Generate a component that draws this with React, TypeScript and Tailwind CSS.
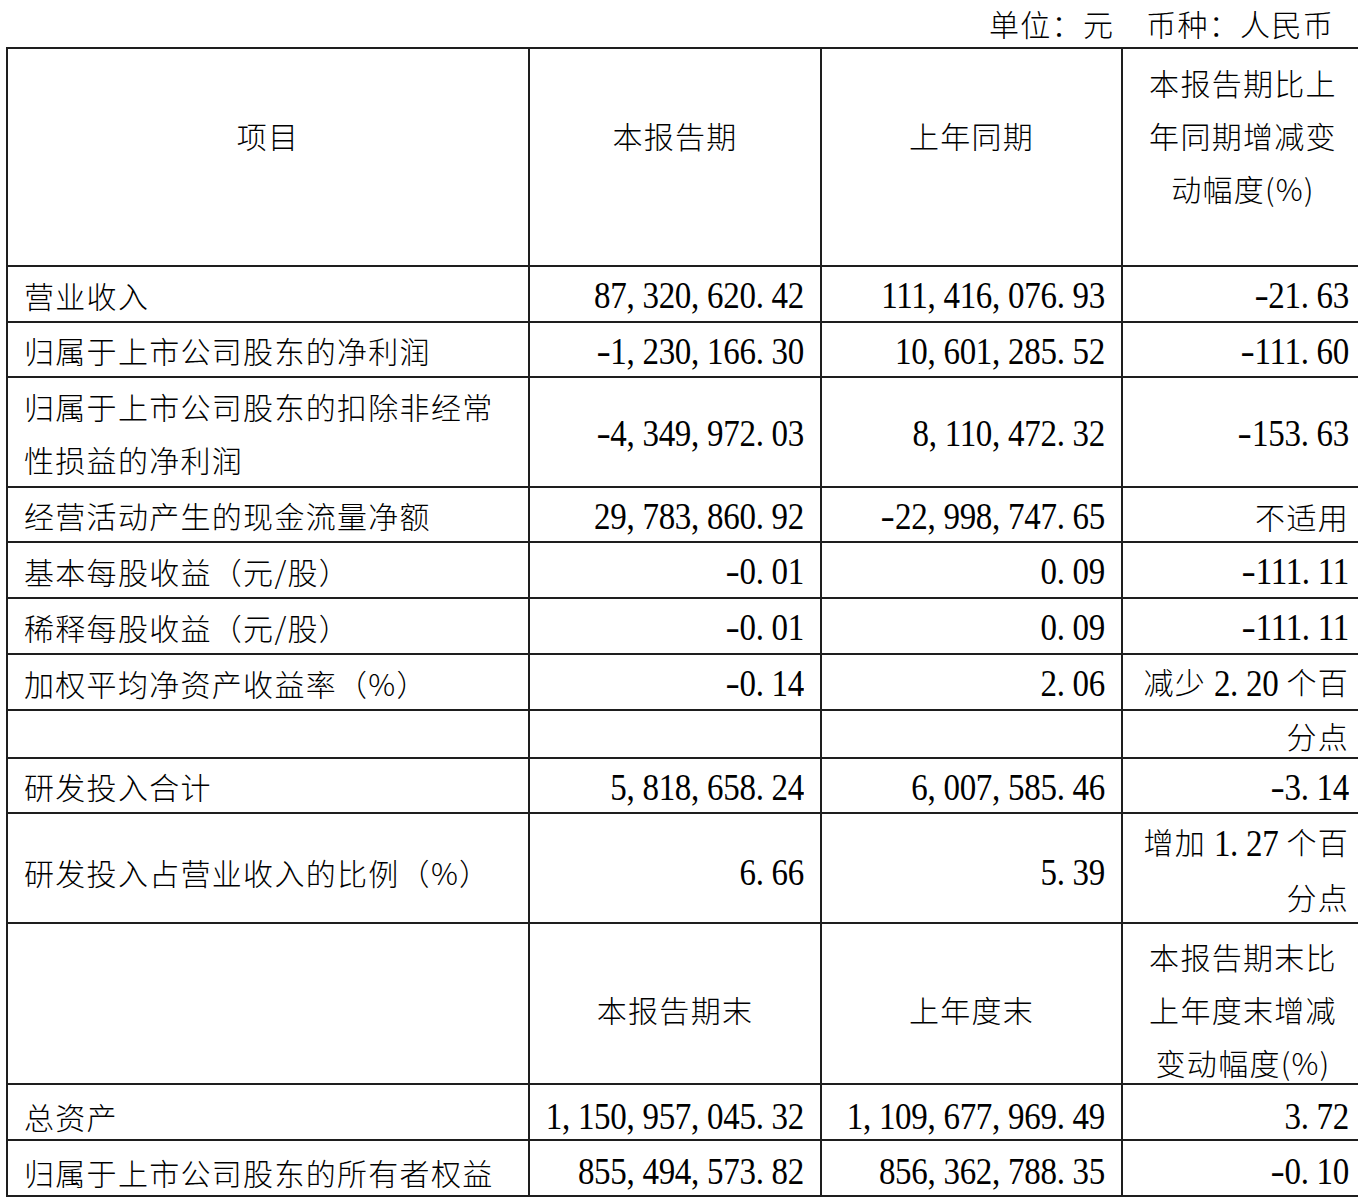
import type { ReactNode } from 'react'

type DataRow = {
  label: string[]
  current: string
  previous: string
  change: ReactNode
  height: string
  pad?: string
}

const GRID = 'grid grid-cols-[522px_292px_301px_242px] grid-rows-1'
const CELL = 'flex min-h-0 border-r-2 border-b-2 border-[#1e1e1e]'

// Digits are set in a serif face; commas, points and minus get a half-width cell like the report font.
function Num({ children }: { children: string }) {
  const parts = children.split(/([,.\-])/).filter(Boolean)
  return (
    <span className="inline-block origin-center scale-y-[1.15] font-['Liberation_Serif',serif] text-[33px] font-normal tracking-[-0.3px]">
      {parts.map((part, i) =>
        part === ',' || part === '.' ? (
          <span key={i} className="mr-[8px]">
            {part}
          </span>
        ) : part === '-' ? (
          <span key={i} className="mr-[2px] inline-block scale-x-[1.3]">
            {part}
          </span>
        ) : (
          <span key={i}>{part}</span>
        ),
      )}
    </span>
  )
}

const topRows: DataRow[] = [
  { label: ['营业收入'], current: '87,320,620.42', previous: '111,416,076.93', change: <Num>-21.63</Num>, height: 'h-[56px]' },
  { label: ['归属于上市公司股东的净利润'], current: '-1,230,166.30', previous: '10,601,285.52', change: <Num>-111.60</Num>, height: 'h-[55px]' },
  {
    label: ['归属于上市公司股东的扣除非经常', '性损益的净利润'],
    current: '-4,349,972.03',
    previous: '8,110,472.32',
    change: <Num>-153.63</Num>,
    height: 'h-[110px]',
  },
  { label: ['经营活动产生的现金流量净额'], current: '29,783,860.92', previous: '-22,998,747.65', change: '不适用', height: 'h-[55px]' },
  { label: ['基本每股收益（元/股）'], current: '-0.01', previous: '0.09', change: <Num>-111.11</Num>, height: 'h-[56px]' },
  { label: ['稀释每股收益（元/股）'], current: '-0.01', previous: '0.09', change: <Num>-111.11</Num>, height: 'h-[56px]' },
  {
    label: ['加权平均净资产收益率（%）'],
    current: '-0.14',
    previous: '2.06',
    change: (
      <>
        减少 <Num>2.20</Num> 个百
      </>
    ),
    height: 'h-[56px]',
  },
]

const bottomRows: DataRow[] = [
  {
    label: ['总资产'],
    current: '1,150,957,045.32',
    previous: '1,109,677,969.49',
    change: <Num>3.72</Num>,
    height: 'h-[56px]',
    pad: 'pt-[9px]',
  },
  {
    label: ['归属于上市公司股东的所有者权益'],
    current: '855,494,573.82',
    previous: '856,362,788.35',
    change: <Num>-0.10</Num>,
    height: 'h-[56px]',
    pad: 'pt-[8px]',
  },
]

function Row({ row }: { row: DataRow }) {
  const pad = row.pad ?? 'pt-[4px]'
  return (
    <div className={`${GRID} ${row.height}`}>
      <div className={`${CELL} flex-col justify-center pl-4 leading-[53px] ${row.pad ?? 'pt-[2px]'}`}>
        {row.label.map((line) => (
          <span key={line}>{line}</span>
        ))}
      </div>
      <div className={`${CELL} items-center justify-end pr-4 ${pad}`}>
        <Num>{row.current}</Num>
      </div>
      <div className={`${CELL} items-center justify-end pr-4 ${pad}`}>
        <Num>{row.previous}</Num>
      </div>
      <div className={`${CELL} items-center justify-end pr-[14px] ${pad}`}>
        <span>{row.change}</span>
      </div>
    </div>
  )
}

function HeaderRow({
  first,
  second,
  third,
  fourth,
  height,
  pad,
}: {
  first: string
  second: string
  third: string
  fourth: string[]
  height: string
  pad: string
}) {
  return (
    <div className={`${GRID} ${height}`}>
      <div className={`${CELL} items-center justify-center ${pad}`}>{first}</div>
      <div className={`${CELL} items-center justify-center ${pad}`}>{second}</div>
      <div className={`${CELL} items-center justify-center ${pad}`}>{third}</div>
      <div className={`${CELL} flex-col items-center justify-center leading-[53px] ${pad}`}>
        {fourth.map((line) => (
          <span key={line}>{line}</span>
        ))}
      </div>
    </div>
  )
}

export default function App() {
  return (
    <div className="h-[1199px] w-[1358px] overflow-hidden bg-white font-['Noto_Sans_CJK_SC',sans-serif] text-[30px] font-light tracking-[1.3px] text-black">
      <div className="flex h-[47px] items-center justify-end pr-[24px]">
        <span>单位：元</span>
        <span className="ml-[32px]">币种：人民币</span>
      </div>

      <div className="ml-[6px] w-[1359px] border-t-2 border-l-2 border-[#1e1e1e]">
        <HeaderRow
          first="项目"
          second="本报告期"
          third="上年同期"
          fourth={['本报告期比上', '年同期增减变', '动幅度(%)']}
          height="h-[218px]"
          pad="pb-[44px]"
        />

        {topRows.map((row) => (
          <Row key={row.label.join('')} row={row} />
        ))}

        <div className={`${GRID} h-[48px]`}>
          <div className={CELL} />
          <div className={CELL} />
          <div className={CELL} />
          <div className={`${CELL} items-center justify-end pr-[14px] pt-[2px]`}>分点</div>
        </div>

        <Row
          row={{ label: ['研发投入合计'], current: '5,818,658.24', previous: '6,007,585.46', change: <Num>-3.14</Num>, height: 'h-[55px]' }}
        />

        <div className={`${GRID} h-[110px]`}>
          <div className={`${CELL} items-center pl-4 pt-[8px]`}>研发投入占营业收入的比例（%）</div>
          <div className={`${CELL} items-center justify-end pr-4 pt-[10px]`}>
            <Num>6.66</Num>
          </div>
          <div className={`${CELL} items-center justify-end pr-4 pt-[10px]`}>
            <Num>5.39</Num>
          </div>
          <div className={`${CELL} flex-col items-end justify-center pr-[14px] pt-[2px] leading-[53px]`}>
            <span>
              增加 <Num>1.27</Num> 个百
            </span>
            <span>分点</span>
          </div>
        </div>

        <HeaderRow
          first=""
          second="本报告期末"
          third="上年度末"
          fourth={['本报告期末比', '上年度末增减', '变动幅度(%)']}
          height="h-[161px]"
          pad="pt-[12px]"
        />

        {bottomRows.map((row) => (
          <Row key={row.label.join('')} row={row} />
        ))}
      </div>
    </div>
  )
}
